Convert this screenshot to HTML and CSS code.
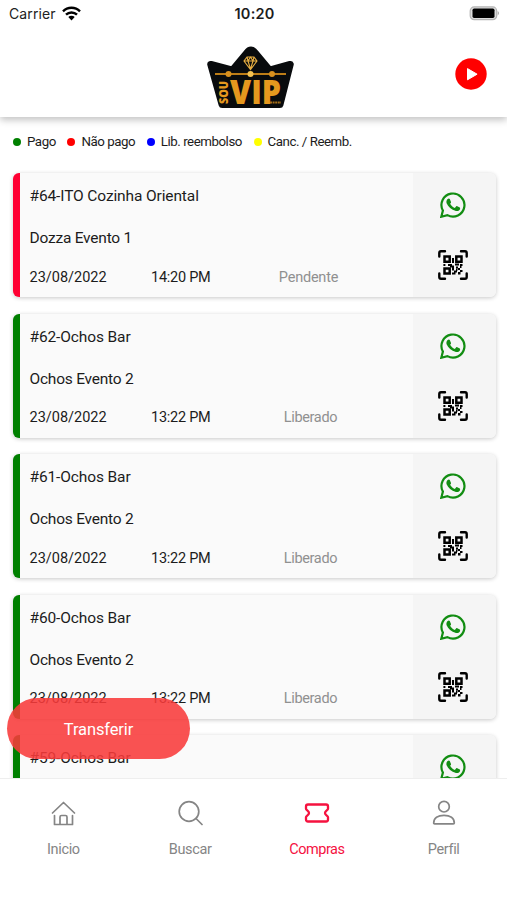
FILE: index.html
```html
<!DOCTYPE html>
<html lang="pt-BR">
<head>
<meta charset="utf-8">
<title>Compras</title>
<link rel="stylesheet" href="styles.css">
</head>
<body>
<svg class="sprite" aria-hidden="true">
  <symbol id="whatsapp" viewBox="0 0 26 26">
    <path d="M1.3 24.7 2.9 18.6A11.5 11.5 0 1 1 7.4 23.1Z" fill="none" stroke="currentColor" stroke-width="2.2" stroke-linejoin="miter"/>
    <path d="M7.700 7c.6-.6 1.700-.7 2.100.1l1.200 2.900c.2.500-.1.900-.9 1.800 1.100 2 2.600 3.300 4.700 4.200l1.500-1.700c.300-.300.600-.300 1-.1l2.500 1.200c.500.300.400 1.600-.1 2.400-.700 1-2.300 1.500-3.800 1.100-4.500-1.200-7.800-4-9.300-7.700-.5-1.500-.1-3.200 1.100-4.200z" fill="currentColor"/>
  </symbol>
  <symbol id="qr" viewBox="0 0 30 30">
    <g fill="none" stroke="#000">
      <path stroke-width="2.400" stroke-linecap="round" stroke-linejoin="round" d="M1.300 6.500V3q0-1.700 1.700-1.700h4M23 1.300h4q1.700 0 1.700 1.700v3.500M28.700 23.500V27q0 1.700-1.700 1.700h-4M7 28.700H3q-1.700 0-1.700-1.700v-3.500"/>
      <path stroke-width="2.500" d="M6.500 6.500h5.200v5.200H6.500zM18.300 6.500h5.200v5.200h-5.200zM6.500 18.400h5.200v5.200H6.500z"/>
    </g>
    <path d="M14 8h2v5h-2zM5.400 14h2v2h-2zM10 14h4v2h-4zM12 15.500h4v2h-4zM14 17.500h2v3h-2zM17 13.500h4v2h-4zM22 14h2.500v2H22zM18 16.500h2v2h-2zM20 18h2v2h-2zM22 16h1.500v2H22zM14 22.500h3.500v2H14zM16 20.500h3v2h-3zM18 18.700h1.500v2H18zM22 20h2.500v2H22zM20 22h2.500v2.500H20z"/>
  </symbol>
</svg>
<div class="app">
  <header class="header">
    <div class="status">
      <div class="carrier"><span>Carrier</span>
        <svg width="19" height="15" viewBox="0 0 19 15"><g fill="none" stroke="#000" stroke-width="2.400"><path d="M1 5.300a12 12 0 0 1 17 0M4 8.700a7.800 7.800 0 0 1 11 0"/></g><path d="M6.300 11a4.600 4.600 0 0 1 6.400 0L9.500 14.400z"/></svg>
      </div>
      <div class="clock">10:20</div>
      <svg class="battery" width="32" height="15" viewBox="0 0 32 15"><rect x="1.200" y=".9" width="26.500" height="12.800" rx="4" fill="#ddd" stroke="#b4b4b4" stroke-width="1.200"/><rect x="3.500" y="2.600" width="22" height="9.300" rx="1.600"/><path d="M28.700 5q2.600 2.200 0 4.400z" fill="#aaa"/></svg>
    </div>
    <div class="brand">
      <svg class="logo" width="88" height="64" viewBox="0 0 88 64">
        <path d="M5 17 26 23 40 5Q44-1 48 5L62 23 82 17 72 59H16Z" fill="#090b0d" stroke="#090b0d" stroke-width="7" stroke-linejoin="round" transform="translate(-1.300 2) scale(1.030 .96)"/>
        <g fill="none" stroke="#e7ae42" stroke-width="1.100"><path d="M40 11h7l3 4-6.500 8.500L37 15zM37 15h13M41 15l2.500 8 2.500-8M40 11l1 4 2.500-4 2.500 4 1-4"/></g>
        <path d="M8 28h71" stroke="#bd7d17" stroke-width="1.800"/>
        <g fill="#d9911f"><circle cx="21.500" cy="28" r="3"/><circle cx="65" cy="28" r="3"/></g><circle cx="43.500" cy="28" r="3" fill="#f4c252"/>
        <g class="logo-text"><text x="23" y="58" textLength="51" lengthAdjust="spacingAndGlyphs" class="logo-vip">VIP</text><text transform="translate(20.500 58) rotate(-90)" textLength="23" lengthAdjust="spacingAndGlyphs" class="logo-sou">SOU</text></g>
        <path d="M63 56.500h11" stroke="#a87019" stroke-width="1.800" stroke-dasharray="2 .6"/>
      </svg>
      <svg class="play" width="32" height="32" viewBox="0 0 32 32"><circle cx="16" cy="16" r="15.700" fill="#f00"/><path d="M12.500 10.600v11.200l9.600-5.600z" fill="#fff" stroke="#fff" stroke-linejoin="round"/></svg>
    </div>
  </header>
  <main class="content">
    <div class="legend">
      <span class="key"><i class="dot paid"></i>Pago</span>
      <span class="key"><i class="dot unpaid"></i>Não pago</span>
      <span class="key"><i class="dot refund"></i>Lib. reembolso</span>
      <span class="key"><i class="dot cancelled"></i>Canc. / Reemb.</span>
    </div>
    <section class="list">
      <article class="card pending"><div class="info"><h2>#64-ITO Cozinha Oriental</h2><p>Dozza Evento 1</p><div class="meta"><span>23/08/2022</span><span class="time">14:20 PM</span><span class="state">Pendente</span></div></div><div class="actions"><svg class="wa"><use href="#whatsapp"/></svg><svg class="qr"><use href="#qr"/></svg></div></article>
      <article class="card released"><div class="info"><h2>#62-Ochos Bar</h2><p>Ochos Evento 2</p><div class="meta"><span>23/08/2022</span><span class="time">13:22 PM</span><span class="state">Liberado</span></div></div><div class="actions"><svg class="wa"><use href="#whatsapp"/></svg><svg class="qr"><use href="#qr"/></svg></div></article>
      <article class="card released"><div class="info"><h2>#61-Ochos Bar</h2><p>Ochos Evento 2</p><div class="meta"><span>23/08/2022</span><span class="time">13:22 PM</span><span class="state">Liberado</span></div></div><div class="actions"><svg class="wa"><use href="#whatsapp"/></svg><svg class="qr"><use href="#qr"/></svg></div></article>
      <article class="card released"><div class="info"><h2>#60-Ochos Bar</h2><p>Ochos Evento 2</p><div class="meta"><span>23/08/2022</span><span class="time">13:22 PM</span><span class="state">Liberado</span></div></div><div class="actions"><svg class="wa"><use href="#whatsapp"/></svg><svg class="qr"><use href="#qr"/></svg></div></article>
      <article class="card released"><div class="info"><h2>#59-Ochos Bar</h2></div><div class="actions"><svg class="wa"><use href="#whatsapp"/></svg></div></article>
    </section>
    <button class="transfer">Transferir</button>
  </main>
  <nav class="tabs">
    <a class="tab"><svg viewBox="0 0 26 26"><path d="M2.500 13 13.500 2.500l11 10.500M4.500 15.500v9h18v-9M10 24v-7q0-1.500 1.500-1.500h4q1.500 0 1.500 1.500v7"/></svg><span>Inicio</span></a>
    <a class="tab"><svg viewBox="0 0 26 26"><circle cx="12" cy="11.500" r="9.800"/><path d="m19 18.500 6 6"/></svg><span>Buscar</span></a>
    <a class="tab active"><svg viewBox="0 0 26 26"><path d="M4 4.500h18q2 0 2 2v2.200c0 1.400-3 2-3 4.300s3 2.900 3 4.300v2.200q0 2-2 2H4q-2 0-2-2v-2.200c0-1.400 3-2 3-4.300s-3-2.900-3-4.300V6.500q0-2 2-2z"/></svg><span>Compras</span></a>
    <a class="tab"><svg viewBox="0 0 26 26"><circle cx="13" cy="6.700" r="5.300"/><path d="M2.700 23c0-5 4.300-7.700 10.300-7.700s10.300 2.700 10.300 7.700q0 .9-1 .9H3.700q-1 0-1-.9z"/></svg><span>Perfil</span></a>
  </nav>
</div>
</body>
</html>
```
FILE: styles.css
```css
* { box-sizing: border-box; }
body { margin: 0; background: #fff; font-family: Roboto, sans-serif; color: #1c1c1c; }
.sprite { display: none; }
.app { height: 900px; display: flex; flex-direction: column; overflow: hidden; }
.header { height: 117px; flex: none; background: #fff; box-shadow: 0 3px 7px rgba(0,0,0,.24); z-index: 1; }
.status { height: 28px; display: grid; grid-template-columns: 1fr auto 1fr; align-items: center; padding: 0 6px 0 9px; font-family: Inter, sans-serif; }
.carrier { display: flex; align-items: center; gap: 6px; font-size: 14px; letter-spacing: .1px; color: #222; margin-top: -1px; }
.carrier svg { margin-top: -1px; }
.clock { font-size: 14.5px; font-weight: 600; letter-spacing: .2px; margin: -1px 1px 0 0; }
.battery { justify-self: end; margin-top: -2px; }
.brand { height: 89px; display: grid; grid-template-columns: 1fr 88px 1fr; padding: 18px 20.5px 0 14.5px; }
.logo { grid-column: 2; overflow: visible; }
.play { justify-self: end; margin-top: 12px; }
.logo-text { fill: #e5981e; font-family: "Open Sans", sans-serif; font-weight: 800; }
.logo-vip { font-size: 33px; }
.logo-sou { font-size: 11.5px; }
.content { flex: 1; min-height: 0; position: relative; overflow: hidden; }
.legend { height: 56px; display: flex; padding: 17px 13px 0; gap: 11.7px; font-size: 13.3px; line-height: 16px; letter-spacing: -.46px; }
.key { display: flex; align-items: flex-start; gap: 6px; white-space: nowrap; }
.dot { width: 8px; height: 8px; border-radius: 50%; margin-top: 4px; }
.paid { background: green; }
.unpaid { background: red; }
.refund { background: blue; }
.cancelled { background: yellow; }
.list { display: flex; flex-direction: column; gap: 16.5px; padding: 0 11px 0 13px; }
.card { height: 124px; flex: none; display: flex; overflow: hidden; border-left: 7px solid; border-radius: 6px; background: #fafafa; box-shadow: 0 1px 4px rgba(0,0,0,.22); }
.pending { border-left-color: #ff0033; }
.released { border-left-color: green; }
.info { flex: 1; padding: 12px 0 0 9.5px; }
.info h2, .info p { margin: 0; font-size: 15.5px; font-weight: 400; line-height: 22px; letter-spacing: -.12px; }
.info p { margin-top: 20px; letter-spacing: -.22px; }
.meta { display: grid; grid-template-columns: 121.5px 93px 129px; margin-top: 17.5px; font-size: 14.5px; line-height: 22px; }
.time { letter-spacing: -.25px; }
.state { text-align: center; color: #909090; letter-spacing: -.22px; }
.released .state { padding-left: 4px; letter-spacing: -.35px; }
.actions { width: 83px; background: #f5f5f5; display: flex; flex-direction: column; align-items: center; padding: 19px 4px 0 0; gap: 32px; }
.wa { width: 26px; height: 26px; color: #128d12; }
.qr { width: 30px; height: 30px; }
.transfer { position: absolute; left: 7px; top: 581px; width: 183px; height: 61px; padding: 1px 0 0; border: 0; border-radius: 31px; background: rgba(248,58,58,.88); color: #fff; font: 16.5px Roboto, sans-serif; letter-spacing: -.12px; }
.tabs { height: 122px; flex: none; display: grid; grid-template-columns: repeat(4, 1fr); border-top: 1px solid #eee; background: #fff; z-index: 1; }
.tab { display: flex; flex-direction: column; align-items: center; padding-top: 21px; gap: 13px; color: #858585; font-size: 14.5px; line-height: 22px; letter-spacing: -.35px; }
.tab svg { width: 26px; height: 26px; fill: none; stroke: currentColor; stroke-width: 1.7; stroke-linecap: round; stroke-linejoin: round; }
.tab.active { color: #f5123f; letter-spacing: -.5px; }
.tab.active svg { stroke-width: 2.3; }
```
